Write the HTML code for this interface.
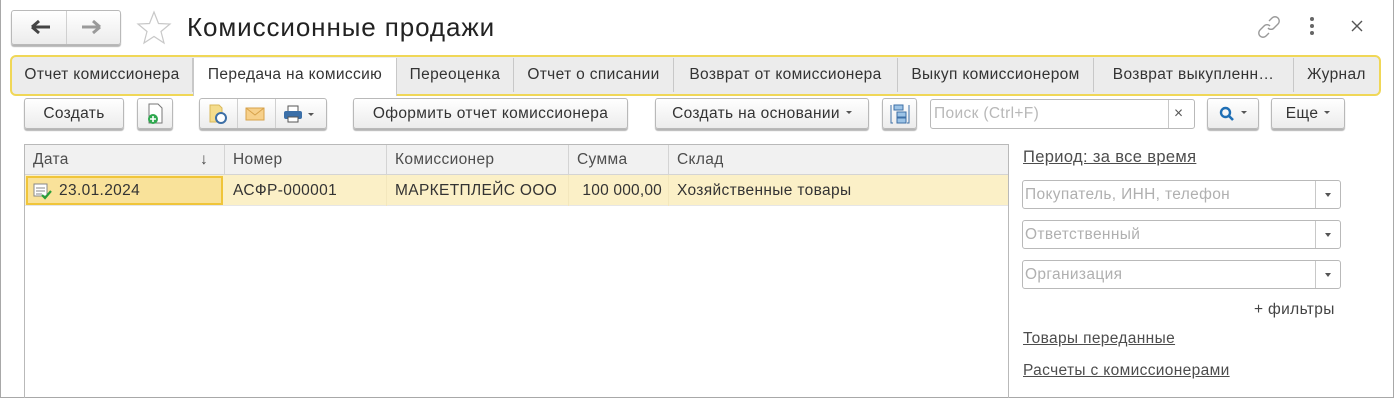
<!DOCTYPE html>
<html><head><meta charset="utf-8"><style>
*{box-sizing:border-box;margin:0;padding:0}
body{width:1395px;height:400px;background:#fff;font-family:"Liberation Sans",Arial,sans-serif;font-size:15.5px;letter-spacing:0.35px;color:#333;position:relative;overflow:hidden}
.a{position:absolute}
.win{left:0;top:0;width:1394px;height:398px;border:1px solid #a8a8a8;border-top:none}
.btn{position:absolute;height:31px;border:1px solid #b9b9b9;border-radius:3px;background:linear-gradient(#fff,#ececec);box-shadow:0 2px 1px #b5b5b5;text-align:center;line-height:29px;color:#333;white-space:nowrap}
.tabbar{left:10px;top:55px;width:1371px;height:41px;border:2px solid #f0d757;border-radius:6px;background:#ececec}
.tab{position:absolute;top:1px;height:34px;line-height:33px;text-align:center;border-right:1px solid #c8c8c8;color:#333;white-space:nowrap;overflow:hidden}
.tab.act{background:#fff;height:38px;border-left:1px solid #c8c8c8}
.th{position:absolute;top:0;height:30px;line-height:30px;padding-left:8px;border-right:1px solid #d4d4d4;color:#4d4d4d}
.td{position:absolute;top:30px;height:31px;line-height:31px;padding-left:8px;color:#333;border-right:1px solid #f3e7bd;white-space:nowrap}
.fld{position:absolute;left:1022px;width:319px;height:29px;border:1px solid #b9b9b9;border-radius:3px;color:#b0b0b0;line-height:27px;padding-left:2px}
.fld:after{content:"";position:absolute;right:24px;top:0;height:27px;border-left:1px solid #c8c8c8}
.fld i{position:absolute;right:9px;top:12px;border:3px solid transparent;border-top:4px solid #555}
.dd{display:inline-block;border:3px solid transparent;border-top:3px solid #555;vertical-align:middle;margin-left:6px}
a{color:#4d4d4d;text-decoration:underline;position:absolute;white-space:nowrap}
</style></head><body>
<div class="a win"></div>
<div class="btn" style="left:11px;top:10px;width:110px;height:35px"></div>
<div class="a" style="left:66px;top:11px;height:33px;border-left:1px solid #d0d0d0"></div>
<svg class="a" style="left:30px;top:19px" width="24" height="16"><path d="M2 8H20M2 8L9 2M2 8L9 14" stroke="#444" stroke-width="3" fill="none"/></svg>
<svg class="a" style="left:80px;top:19px" width="24" height="16"><path d="M2 8H20M20 8L13 2M20 8L13 14" stroke="#9a9a9a" stroke-width="3" fill="none"/></svg>
<svg class="a" style="left:136px;top:10px" width="36" height="36"><path d="M18 2L22.5 13.5L34 14L25 21.5L28 33L18 26.5L8 33L11 21.5L2 14L13.5 13.5Z" fill="none" stroke="#c8c8c8" stroke-width="1.2"/></svg>
<div class="a" style="left:187px;top:10px;font-size:26px;color:#222;line-height:34px;letter-spacing:0.9px">Комиссионные продажи</div>
<svg class="a" style="left:1256px;top:14px" width="26" height="26"><path d="M13 7l3-3a4 4 0 0 1 6 6l-4 4a4 4 0 0 1-6 0M13 19l-3 3a4 4 0 0 1-6-6l4-4a4 4 0 0 1 6 0" stroke="#999" stroke-width="1.4" fill="none"/></svg>
<svg class="a" style="left:1308px;top:15px" width="8" height="22"><circle cx="4" cy="4" r="2" fill="#666"/><circle cx="4" cy="11" r="2" fill="#666"/><circle cx="4" cy="18" r="2" fill="#666"/></svg>
<svg class="a" style="left:1351px;top:20px" width="12" height="12"><path d="M1 1L11 11M11 1L1 11" stroke="#555" stroke-width="1.4"/></svg>
<div class="a tabbar">
<div class="tab" style="left:0;width:181px">Отчет комиссионера</div>
<div class="tab act" style="left:181px;width:204px">Передача на комиссию</div>
<div class="tab" style="left:385px;width:117px">Переоценка</div>
<div class="tab" style="left:502px;width:160px">Отчет о списании</div>
<div class="tab" style="left:662px;width:224px">Возврат от комиссионера</div>
<div class="tab" style="left:886px;width:196px">Выкуп комиссионером</div>
<div class="tab" style="left:1082px;width:200px">Возврат выкупленн…</div>
<div class="tab" style="left:1282px;width:85px;border-right:none">Журнал</div>
</div>
<div class="btn" style="left:24px;top:98px;width:100px">Создать</div>
<div class="btn" style="left:137px;top:98px;width:36px"><svg width="20" height="24" style="margin-top:3px"><path d="M4 2H13L17 6V21H4Z" fill="#fff" stroke="#777"/><circle cx="8" cy="17" r="5" fill="#2fa84f"/><path d="M8 14V20M5 17H11" stroke="#fff" stroke-width="1.6"/></svg></div>
<div class="btn" style="left:199px;top:98px;width:128px"></div>
<div class="a" style="left:237px;top:99px;height:29px;border-left:1px solid #d0d0d0"></div>
<div class="a" style="left:275px;top:99px;height:29px;border-left:1px solid #d0d0d0"></div>
<svg class="a" style="left:207px;top:103px" width="22" height="22"><path d="M3 2H12L15 5V19H3Z" fill="#f4dc8c" stroke="#d9b85a"/><circle cx="14" cy="15" r="5" fill="#fff" stroke="#3d6fa6" stroke-width="2"/></svg>
<svg class="a" style="left:245px;top:106px" width="20" height="16"><rect x="1" y="2" width="18" height="12" fill="#f7d08a" stroke="#d7a24b"/><path d="M1 2L10 9L19 2" stroke="#d7a24b" fill="none"/></svg>
<svg class="a" style="left:283px;top:104px" width="20" height="20"><rect x="5" y="2" width="10" height="6" fill="#fff" stroke="#555"/><rect x="1" y="7" width="18" height="8" rx="2" fill="#3b6fa8"/><rect x="5" y="13" width="10" height="5" fill="#fff" stroke="#555"/></svg>
<span class="a dd" style="left:308px;top:113px;margin:0"></span>
<div class="btn" style="left:353px;top:98px;width:275px">Оформить отчет комиссионера</div>
<div class="btn" style="left:655px;top:98px;width:214px">Создать на основании<span class="dd"></span></div>
<div class="btn" style="left:882px;top:98px;width:35px"><svg width="20" height="22" style="margin-top:4px"><rect x="4" y="2" width="9" height="5" fill="#9cc3e6" stroke="#3d6fa6"/><rect x="7" y="9" width="9" height="5" fill="#9cc3e6" stroke="#3d6fa6"/><rect x="7" y="15" width="9" height="5" fill="#9cc3e6" stroke="#3d6fa6"/><path d="M1 2V20H3M19 2V20H17" stroke="#3d6fa6" fill="none"/></svg></div>
<div class="a" style="left:930px;top:99px;width:265px;height:30px;border:1px solid #b9b9b9;border-radius:3px;color:#b8b8b8;line-height:28px;padding-left:3px">Поиск (Ctrl+F)<span class="a" style="left:237px;top:0;height:28px;border-left:1px solid #c8c8c8"></span><span class="a" style="left:243px;top:0;color:#555">×</span></div>
<div class="btn" style="left:1207px;top:98px;width:52px"><svg width="16" height="16" style="vertical-align:middle"><circle cx="6.5" cy="6.5" r="4.5" stroke="#1f6fb5" stroke-width="2.4" fill="none"/><path d="M10 10L14 14" stroke="#1f6fb5" stroke-width="2.6"/></svg><span class="dd"></span></div>
<div class="btn" style="left:1271px;top:98px;width:74px">Еще<span class="dd"></span></div>
<div class="a" style="left:24px;top:144px;width:985px;height:254px;border:1px solid #b9b9b9;border-bottom:none">
<div class="a" style="left:0;top:0;width:983px;height:30px;background:#f1f1f1;border-bottom:1px solid #d4d4d4"></div>
<div class="th" style="left:0;width:200px">Дата<span class="a" style="left:175px;color:#444">↓</span></div>
<div class="th" style="left:200px;width:162px">Номер</div>
<div class="th" style="left:362px;width:182px">Комиссионер</div>
<div class="th" style="left:544px;width:100px">Сумма</div>
<div class="th" style="left:644px;width:339px;border-right:none">Склад</div>
<div class="a" style="left:0;top:30px;width:983px;height:31px;background:#fbf0c7;border-bottom:1px solid #e6e6e6"></div>
<div class="a" style="left:1px;top:31px;width:197px;height:29px;border:2px solid #f0c53a;background:#f9e29a"></div>
<div class="td" style="left:0;width:200px;padding-left:34px;border:none">23.01.2024</div>
<svg class="a" style="left:8px;top:38px" width="20" height="18"><rect x="1" y="1" width="13" height="12" fill="#fff" stroke="#888"/><path d="M3 5H12M3 8H12M3 11H9" stroke="#888"/><path d="M9 12L12 15L18 8" stroke="#2a9d3a" stroke-width="2.2" fill="none"/></svg>
<div class="td" style="left:200px;width:162px">АСФР-000001</div>
<div class="td" style="left:362px;width:182px">МАРКЕТПЛЕЙС ООО</div>
<div class="td" style="left:544px;width:100px;padding:0 6px 0 0;text-align:right;letter-spacing:0.2px">100 000,00</div>
<div class="td" style="left:644px;width:339px;border:none">Хозяйственные товары</div>
</div>
<a style="left:1023px;top:148px;font-size:16.5px">Период: за все время</a>
<div class="fld" style="top:180px">Покупатель, ИНН, телефон<i></i></div>
<div class="fld" style="top:220px">Ответственный<i></i></div>
<div class="fld" style="top:260px">Организация<i></i></div>
<div class="a" style="left:1254px;top:301px;color:#444">+ фильтры</div>
<a style="left:1023px;top:330px">Товары переданные</a>
<a style="left:1023px;top:362px">Расчеты с комиссионерами</a>
</body></html>
